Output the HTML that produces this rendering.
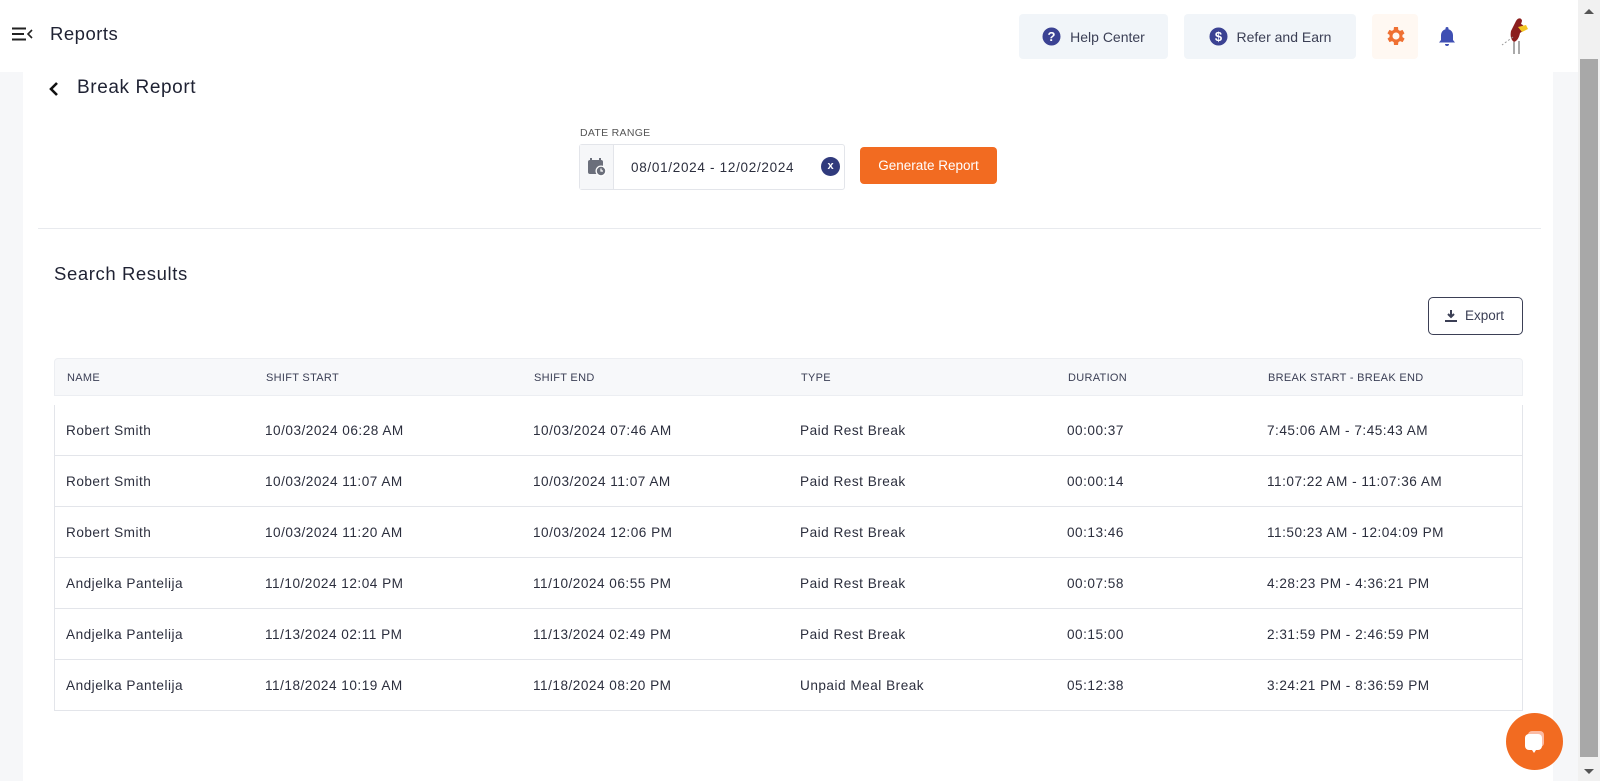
<!DOCTYPE html>
<html><head><meta charset="utf-8"><style>
*{box-sizing:border-box;margin:0;padding:0}
body{width:1600px;height:781px;overflow:hidden;background:#f6f7f9;font-family:"Liberation Sans",sans-serif;color:#1f2233;position:relative}
.hdr{position:absolute;left:0;top:0;width:1578px;height:72px;background:#fff}
.card{position:absolute;left:23px;top:72px;width:1530px;height:709px;background:#fff}
.abs{position:absolute}
.tb{position:absolute;top:14px;height:45px;background:#f1f5f9;border-radius:4px;font-size:14px;color:#3b3f55;display:flex;align-items:center;justify-content:center;gap:9px}
.th{position:absolute;top:0;font-size:11px;color:#3b3f55;line-height:38px;letter-spacing:0.3px}
.row{position:absolute;left:54px;width:1469px;height:51px;border-bottom:1px solid #e3e5ea;border-left:1px solid #e3e5ea;border-right:1px solid #e3e5ea;font-size:13.6px;letter-spacing:0.5px;color:#2b2e3d}
.row span{position:absolute;top:0;line-height:51px}
</style></head><body>
<div class="hdr">
 <svg class="abs" style="left:12px;top:27px" width="22" height="14" viewBox="0 0 22 14"><path d="M0 1.5H14M0 7H12M0 12.5H14" stroke="#222" stroke-width="2"/><path d="M20 3L16 7L20 11" stroke="#222" stroke-width="1.6" fill="none"/></svg>
 <div class="abs" style="left:50px;top:23px;font-size:18.5px;letter-spacing:0.5px;color:#1f2233">Reports</div>
 <div class="tb" style="left:1019px;width:149px"><svg width="19" height="19"><circle cx="9.5" cy="9.5" r="9" fill="#3b4293"/><text x="9.5" y="14" font-size="13" font-weight="bold" fill="#fff" text-anchor="middle" font-family="Liberation Sans">?</text></svg>Help Center</div>
 <div class="tb" style="left:1184px;width:172px"><svg width="19" height="19"><circle cx="9.5" cy="9.5" r="9" fill="#3b4293"/><text x="9.5" y="14" font-size="13" font-weight="bold" fill="#fff" text-anchor="middle" font-family="Liberation Sans">$</text></svg>Refer and Earn</div>
 <div class="abs" style="left:1372px;top:14px;width:46px;height:45px;background:#fff8f2;border-radius:4px"></div>
 <svg class="abs" style="left:1383px;top:24px" width="24" height="24" viewBox="0 0 24 24"><path fill="#ef7032" d="M19.4 13a7.5 7.5 0 000-2l2.1-1.6-2-3.5-2.5 1a7.6 7.6 0 00-1.7-1L15 3h-4l-.4 2.9a7.6 7.6 0 00-1.7 1l-2.5-1-2 3.5L6.6 11a7.5 7.5 0 000 2l-2.1 1.6 2 3.5 2.5-1a7.6 7.6 0 001.7 1L11 21h4l.4-2.9a7.6 7.6 0 001.7-1l2.5 1 2-3.5zM13 15.5a3.5 3.5 0 110-7 3.5 3.5 0 010 7z"/></svg>
 <svg class="abs" style="left:1438px;top:26px" width="18" height="21" viewBox="0 0 18 21"><path fill="#3f4fb3" d="M9 1a1.5 1.5 0 011.5 1.5v.7A6 6 0 0115 9v5l2 2.5H1L3 14V9a6 6 0 014.5-5.8v-.7A1.5 1.5 0 019 1zM7 18h4a2 2 0 01-4 0z"/></svg>
 <svg class="abs" style="left:1498px;top:15px" width="36" height="44" viewBox="0 0 36 44"><path d="M18 6c2-4 6-3 6 0l-1 3c3 1 4 4 2 7l-3 2c-1 5-3 8-6 9-3-2-4-6-3-11z" fill="#8b1e1e"/><path d="M20 12l8-2 2 4-6 3z" fill="#f3c623"/><path d="M16 27v12M21 26v13" stroke="#555" stroke-width="1"/><path d="M15 22L4 30" stroke="#999" stroke-width="1" stroke-dasharray="2 2"/></svg>
</div>
<div class="card"></div>
<svg class="abs" style="left:48px;top:81px" width="12" height="16" viewBox="0 0 12 16"><path d="M9 2L3 8L9 14" stroke="#111" stroke-width="2.6" fill="none"/></svg>
<div class="abs" style="left:77px;top:77px;font-size:19px;letter-spacing:0.6px;color:#1f2233">Break Report</div>
<div class="abs" style="left:580px;top:127px;font-size:10.5px;letter-spacing:0.3px;color:#555">DATE RANGE</div>
<div class="abs" style="left:579px;top:144px;width:266px;height:46px;border:1px solid #e3e5ea;border-radius:3px;background:#fff"></div>
<div class="abs" style="left:580px;top:145px;width:34px;height:44px;background:#f6f7f9;border-right:1px solid #e3e5ea"></div>
<svg class="abs" style="left:587px;top:157px" width="20" height="20" viewBox="0 0 20 20"><rect x="1" y="3" width="15" height="14" rx="2" fill="#6b6f7b"/><path d="M4 1v4M13 1v4" stroke="#6b6f7b" stroke-width="2"/><circle cx="14" cy="14" r="5.5" fill="#fff"/><circle cx="14" cy="14" r="4.2" fill="#6b6f7b"/><path d="M14 11.5V14h2" stroke="#fff" stroke-width="1.2" fill="none"/></svg>
<div class="abs" style="left:631px;top:160px;font-size:13.5px;letter-spacing:0.7px;color:#2b2e3d">08/01/2024 - 12/02/2024</div>
<div class="abs" style="left:821px;top:157px;width:19px;height:19px;border-radius:50%;background:#303a7c;color:#fff;font-size:11px;font-weight:bold;text-align:center;line-height:18px">x</div>
<div class="abs" style="left:860px;top:147px;width:137px;height:37px;border-radius:4px;background:#f26b21;color:#fff;font-size:13.5px;text-align:center;line-height:37px">Generate Report</div>
<div class="abs" style="left:38px;top:228px;width:1503px;height:1px;background:#e8eaee"></div>
<div class="abs" style="left:54px;top:263px;font-size:18.5px;letter-spacing:0.6px;color:#1f2233">Search Results</div>
<div class="abs" style="left:1428px;top:297px;width:95px;height:38px;border:1px solid #3b3f55;border-radius:5px;font-size:13.5px;color:#3b3f55;line-height:36px;padding-left:36px">Export</div>
<svg class="abs" style="left:1444px;top:309px" width="14" height="14" viewBox="0 0 14 14"><path d="M7 1v7M4 5l3 3 3-3" stroke="#3b3f55" stroke-width="2" fill="none"/><path d="M1 12h12" stroke="#3b3f55" stroke-width="2"/></svg>
<div class="abs" style="left:54px;top:358px;width:1469px;height:38px;background:#f7f8fa;border:1px solid #eceef2;border-radius:4px 4px 0 0">
 <span class="th" style="left:12px">NAME</span><span class="th" style="left:211px">SHIFT START</span><span class="th" style="left:479px">SHIFT END</span><span class="th" style="left:746px">TYPE</span><span class="th" style="left:1013px">DURATION</span><span class="th" style="left:1213px">BREAK START - BREAK END</span>
</div>
<div class="row" style="top:405px"><span style="left:11px">Robert Smith</span><span style="left:210px">10/03/2024 06:28 AM</span><span style="left:478px">10/03/2024 07:46 AM</span><span style="left:745px">Paid Rest Break</span><span style="left:1012px">00:00:37</span><span style="left:1212px">7:45:06 AM - 7:45:43 AM</span></div>
<div class="row" style="top:456px"><span style="left:11px">Robert Smith</span><span style="left:210px">10/03/2024 11:07 AM</span><span style="left:478px">10/03/2024 11:07 AM</span><span style="left:745px">Paid Rest Break</span><span style="left:1012px">00:00:14</span><span style="left:1212px">11:07:22 AM - 11:07:36 AM</span></div>
<div class="row" style="top:507px"><span style="left:11px">Robert Smith</span><span style="left:210px">10/03/2024 11:20 AM</span><span style="left:478px">10/03/2024 12:06 PM</span><span style="left:745px">Paid Rest Break</span><span style="left:1012px">00:13:46</span><span style="left:1212px">11:50:23 AM - 12:04:09 PM</span></div>
<div class="row" style="top:558px"><span style="left:11px">Andjelka Pantelija</span><span style="left:210px">11/10/2024 12:04 PM</span><span style="left:478px">11/10/2024 06:55 PM</span><span style="left:745px">Paid Rest Break</span><span style="left:1012px">00:07:58</span><span style="left:1212px">4:28:23 PM - 4:36:21 PM</span></div>
<div class="row" style="top:609px"><span style="left:11px">Andjelka Pantelija</span><span style="left:210px">11/13/2024 02:11 PM</span><span style="left:478px">11/13/2024 02:49 PM</span><span style="left:745px">Paid Rest Break</span><span style="left:1012px">00:15:00</span><span style="left:1212px">2:31:59 PM - 2:46:59 PM</span></div>
<div class="row" style="top:660px"><span style="left:11px">Andjelka Pantelija</span><span style="left:210px">11/18/2024 10:19 AM</span><span style="left:478px">11/18/2024 08:20 PM</span><span style="left:745px">Unpaid Meal Break</span><span style="left:1012px">05:12:38</span><span style="left:1212px">3:24:21 PM - 8:36:59 PM</span></div>
<div class="abs" style="left:1506px;top:713px;width:57px;height:57px;border-radius:50%;background:#f26b21"></div>
<svg class="abs" style="left:1520px;top:727px" width="30" height="30" viewBox="0 0 30 30"><rect x="8" y="4" width="16" height="16" rx="4" fill="#fdd" opacity=".7"/><rect x="5" y="7" width="17" height="16" rx="4" fill="#fff"/><path d="M12 23l2 3 2-3z" fill="#fff"/></svg>
<div class="abs" style="left:1578px;top:0;width:22px;height:781px;background:#f1f1f1"></div>
<div class="abs" style="left:1580px;top:59px;width:18px;height:698px;background:#a8a8a8"></div>
<div class="abs" style="left:1584px;top:9px;width:0;height:0;border-left:5px solid transparent;border-right:5px solid transparent;border-bottom:5px solid #555"></div>
<div class="abs" style="left:1584px;top:769px;width:0;height:0;border-left:5px solid transparent;border-right:5px solid transparent;border-top:5px solid #555"></div>
</body></html>
